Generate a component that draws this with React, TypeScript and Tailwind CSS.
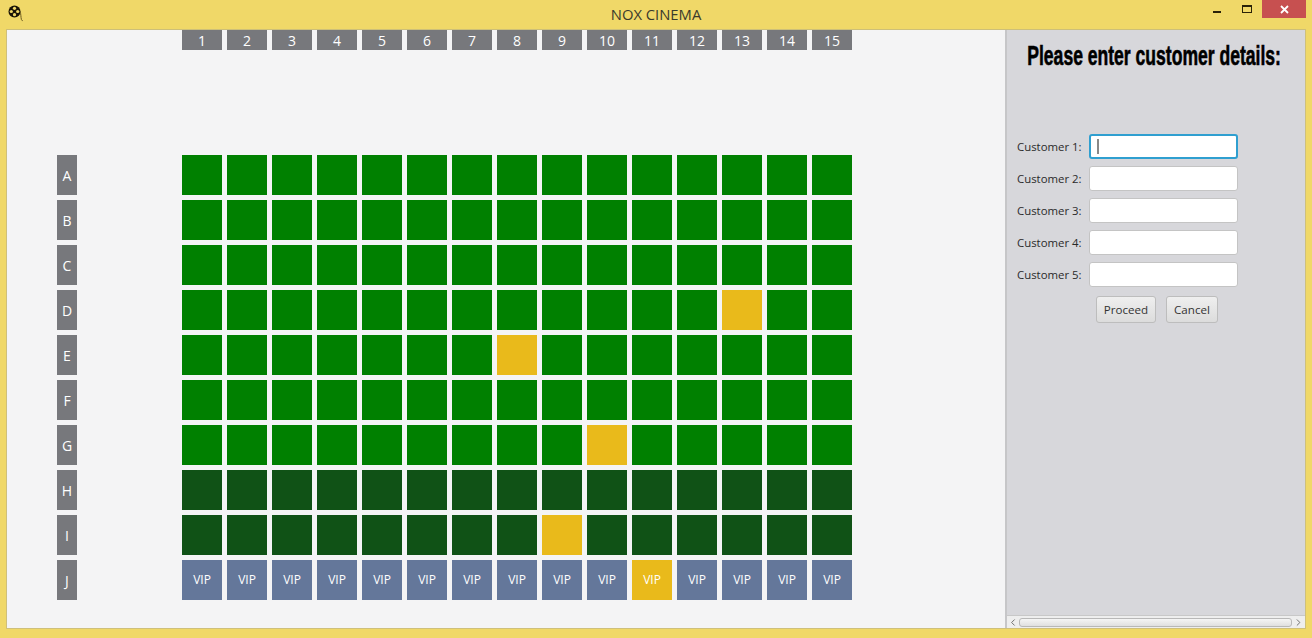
import { ChevronLeft, ChevronRight } from "lucide-react";

// --- Data ---
const ROWS = ["A", "B", "C", "D", "E", "F", "G", "H", "I", "J"];
const COLS = Array.from({ length: 15 }, (_, i) => i + 1);
const RESERVED = ["D13", "E8", "G10", "I9", "J11"];
const CUSTOMERS = [1, 2, 3, 4, 5];

function seatClass(row: string, col: number) {
  if (RESERVED.includes(`${row}${col}`)) return "bg-[#e9ba1b]";
  if (row === "J") return "bg-[#64779a]";
  if (row === "H" || row === "I") return "bg-[#105216]";
  return "bg-[#008000]";
}

// --- Icons ---
function ReelIcon() {
  return (
    <svg width="18" height="18" viewBox="0 0 18 18" className="ml-[7px] mt-[4px]">
      <circle cx="7.5" cy="7.5" r="6" fill="#1a1408" />
      <circle cx="7.5" cy="4.3" r="1.6" fill="#f0d868" />
      <circle cx="7.5" cy="10.7" r="1.6" fill="#f0d868" />
      <circle cx="4.3" cy="7.5" r="1.6" fill="#f0d868" />
      <circle cx="10.7" cy="7.5" r="1.6" fill="#f0d868" />
      <path d="M13 7c1 3 .8 6 1.4 8.5.2 1 .8 1.2 1.4 1" fill="none" stroke="#6b5a20" strokeWidth="1" />
    </svg>
  );
}

function WindowControls() {
  return (
    <div className="flex items-start pr-[6px]">
      <div className="w-[44px] h-[18px] flex justify-center items-center">
        <div className="w-[8px] h-[2px] mt-[5px] bg-[#2a2208]" />
      </div>
      <div className="w-[16px] h-[18px] flex justify-center items-center mr-[7px]">
        <div className="w-[10px] h-[8px] border border-[#2a2208] border-t-2 -mt-[1px]" />
      </div>
      <div className="w-[44px] h-[18px] bg-[#c75050] flex justify-center items-center">
        <svg width="9" height="9" viewBox="0 0 9 9">
          <path d="M1 1l7 7M8 1L1 8" stroke="#fff" strokeWidth="1.8" />
        </svg>
      </div>
    </div>
  );
}

export default function App() {
  return (
    <div
      className="w-[1312px] h-[638px] overflow-hidden flex flex-col bg-[#f0d868] text-[#222]"
      style={{ fontFamily: '"Open Sans", "Noto Sans", sans-serif' }}
    >
      {/* Title bar */}
      <div className="h-[29px] shrink-0 grid grid-cols-[1fr_auto_1fr] items-start">
        <ReelIcon />
        <div className="text-[14.8px] leading-[28px] text-[#3a3a2c]">NOX CINEMA</div>
        <div className="flex justify-end">
          <WindowControls />
        </div>
      </div>

      {/* Body */}
      <div className="mx-[6px] h-[600px] shrink-0 flex border border-[#cfc07a] border-t-[#cdbf78]">
        {/* Seat map */}
        <div className="w-[1000px] shrink-0 bg-[#f4f4f5] border-r-2 border-[#c6c6c8]">
          <div className="flex gap-[5px] pl-[175px]">
            {COLS.map((c) => (
              <div
                key={c}
                className="w-[40px] h-[20px] bg-[#77787c] text-white text-[14px] leading-[22px] text-center"
              >
                {c}
              </div>
            ))}
          </div>
          <div className="flex mt-[105px] pl-[50px]">
            <div className="w-[20px] mr-[105px] flex flex-col gap-[5px]">
              {ROWS.map((r) => (
                <div
                  key={r}
                  className="h-[40px] bg-[#77787c] text-white text-[14px] flex items-center justify-center"
                >
                  {r}
                </div>
              ))}
            </div>
            <div className="grid grid-cols-[repeat(15,40px)] auto-rows-[40px] gap-[5px]">
              {ROWS.map((r) =>
                COLS.map((c) => (
                  <div
                    key={r + c}
                    className={`${seatClass(r, c)} flex items-center justify-center text-white text-[12px]`}
                  >
                    {r === "J" ? "VIP" : ""}
                  </div>
                ))
              )}
            </div>
          </div>
        </div>

        {/* Customer details */}
        <div className="flex-1 min-w-0 bg-[#d7d7db] flex flex-col">
          <div className="flex-1 flex flex-col">
            <div className="mt-[11px] pr-[3px] flex justify-center">
              <h1
                className="w-max shrink-0 whitespace-nowrap text-[27px] leading-[30px] font-bold text-black scale-x-[0.65] [-webkit-text-stroke:0.6px_black]"
                style={{ fontFamily: '"Liberation Sans", sans-serif' }}
              >
                Please enter customer details:
              </h1>
            </div>
            <div className="mt-[63px] pl-[10px] flex flex-col gap-[7px]">
              {CUSTOMERS.map((n) => (
                <div key={n} className="flex items-center">
                  <label className="w-[64px] pt-[1px] text-[11.4px] whitespace-nowrap text-[#2a2a2a]">
                    Customer {n}:
                  </label>
                  <div
                    className={
                      n === 1
                        ? "ml-[8px] w-[149px] h-[25px] bg-white rounded-[3px] border-2 border-[#2f9fd0] flex items-center pl-[6px]"
                        : "ml-[8px] w-[149px] h-[25px] bg-white rounded-[3px] border border-[#c4c4c4]"
                    }
                  >
                    {n === 1 && <div className="w-[2px] h-[15px] bg-[#888]" />}
                  </div>
                </div>
              ))}
            </div>
            <div className="mt-[9px] pl-[89px] flex gap-[10px]">
              <button className="w-[60px] h-[27px] rounded-[3px] border border-[#bdbdbd] bg-gradient-to-b from-[#efefef] to-[#dcdcdc] text-[11.6px] text-[#333]">
                Proceed
              </button>
              <button className="w-[52px] h-[27px] rounded-[3px] border border-[#bdbdbd] bg-gradient-to-b from-[#efefef] to-[#dcdcdc] text-[11.6px] text-[#333]">
                Cancel
              </button>
            </div>
          </div>

          {/* Scrollbar */}
          <div className="h-[13px] bg-[#eeeeee] border-t border-[#c8c8c8] flex items-center">
            <ChevronLeft size={11} className="w-[12px] text-[#666]" />
            <div className="flex-1 h-[9px] rounded-[3px] border border-[#b8b8b8] bg-gradient-to-b from-[#f5f5f5] to-[#e0e0e0]" />
            <ChevronRight size={11} className="w-[13px] text-[#666]" />
          </div>
        </div>
      </div>
    </div>
  );
}
